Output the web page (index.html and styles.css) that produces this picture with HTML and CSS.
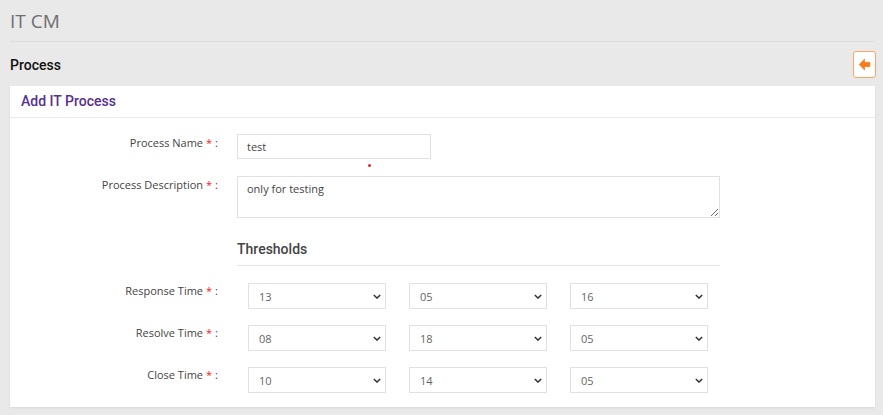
FILE: index.html
```html
<!DOCTYPE html>
<html>
<head>
  <meta charset="UTF-8">
  <title>IT CM - Add IT Process</title>
  <link rel="stylesheet" href="styles.css">
</head>
<body>
  <div class="page">
    <div class="page-header">
      <h1>IT CM</h1>
    </div>

    <div class="section-bar">
      <h2>Process</h2>
      <button class="back-btn" type="button" title="Back">
        <svg width="13" height="13" viewBox="0 0 12 12">
          <path d="M1 6 L6 1 L6 4 L11 4 L11 8 L6 8 L6 11 Z" fill="#f57c1f" stroke="#f57c1f" stroke-width="0.6" stroke-linejoin="round"/>
        </svg>
      </button>
    </div>

    <div class="card">
      <div class="card-header">Add IT Process</div>
      <div class="card-body">
        <div class="form-row">
          <label class="form-label">Process Name<span class="req">*</span><span class="colon">:</span></label>
          <div class="field">
            <input class="text-input name-input" type="text" value="test">
            <span class="error-dot"></span>
          </div>
        </div>

        <div class="form-row">
          <label class="form-label">Process Description<span class="req">*</span><span class="colon">:</span></label>
          <div class="field">
            <textarea class="text-input desc-input">only for testing</textarea>
          </div>
        </div>

        <div class="form-row">
          <div></div>
          <div class="thresholds-title">Thresholds</div>
        </div>

        <div class="form-row threshold-row">
          <label class="form-label">Response Time<span class="req">*</span><span class="colon">:</span></label>
          <div class="select-group">
            <div class="select-wrap"><select><option>13</option></select><svg class="chevron" viewBox="0 0 10 6"><path d="M1 1 L5 5 L9 1" fill="none" stroke="#333" stroke-width="1.8"/></svg></div>
            <div class="select-wrap"><select><option>05</option></select><svg class="chevron" viewBox="0 0 10 6"><path d="M1 1 L5 5 L9 1" fill="none" stroke="#333" stroke-width="1.8"/></svg></div>
            <div class="select-wrap"><select><option>16</option></select><svg class="chevron" viewBox="0 0 10 6"><path d="M1 1 L5 5 L9 1" fill="none" stroke="#333" stroke-width="1.8"/></svg></div>
          </div>
        </div>

        <div class="form-row threshold-row">
          <label class="form-label">Resolve Time<span class="req">*</span><span class="colon">:</span></label>
          <div class="select-group">
            <div class="select-wrap"><select><option>08</option></select><svg class="chevron" viewBox="0 0 10 6"><path d="M1 1 L5 5 L9 1" fill="none" stroke="#333" stroke-width="1.8"/></svg></div>
            <div class="select-wrap"><select><option>18</option></select><svg class="chevron" viewBox="0 0 10 6"><path d="M1 1 L5 5 L9 1" fill="none" stroke="#333" stroke-width="1.8"/></svg></div>
            <div class="select-wrap"><select><option>05</option></select><svg class="chevron" viewBox="0 0 10 6"><path d="M1 1 L5 5 L9 1" fill="none" stroke="#333" stroke-width="1.8"/></svg></div>
          </div>
        </div>

        <div class="form-row threshold-row">
          <label class="form-label">Close Time<span class="req">*</span><span class="colon">:</span></label>
          <div class="select-group">
            <div class="select-wrap"><select><option>10</option></select><svg class="chevron" viewBox="0 0 10 6"><path d="M1 1 L5 5 L9 1" fill="none" stroke="#333" stroke-width="1.8"/></svg></div>
            <div class="select-wrap"><select><option>14</option></select><svg class="chevron" viewBox="0 0 10 6"><path d="M1 1 L5 5 L9 1" fill="none" stroke="#333" stroke-width="1.8"/></svg></div>
            <div class="select-wrap"><select><option>05</option></select><svg class="chevron" viewBox="0 0 10 6"><path d="M1 1 L5 5 L9 1" fill="none" stroke="#333" stroke-width="1.8"/></svg></div>
          </div>
        </div>
      </div>
    </div>
  </div>
</body>
</html>
```

FILE: styles.css
```css
body {
  margin: 0;
  background-color: #e9e9e9;
  font-family: "Open Sans", "Noto Sans", sans-serif;
  color: #444;
}

.page {
  padding: 0 8px 8px 10px;
}

/* Page title */
.page-header {
  padding: 9px 0 8px;
  border-bottom: 1px solid #dcdcdc;
}

.page-header h1 {
  margin: 0;
  font-size: 19px;
  font-weight: 400;
  color: #6f6f6f;
  line-height: 24px;
}

/* Section bar with back button */
.section-bar {
  display: flex;
  align-items: center;
  justify-content: space-between;
  padding: 9px 0 8px;
}

.section-bar h2 {
  margin: 0;
  font-family: Roboto, sans-serif;
  font-size: 14px;
  font-weight: 500;
  color: #111;
}

.back-btn {
  width: 23px;
  height: 27px;
  margin-right: -1px;
  padding: 0;
  display: flex;
  align-items: center;
  justify-content: center;
  background: #fff;
  border: 1px solid #f7a565;
  border-radius: 3px;
}

/* Card */
.card {
  background: #fff;
  box-shadow: 0 1px 2px rgba(0, 0, 0, 0.08);
}

.card-header {
  padding: 7px 11px 8px;
  font-family: Roboto, sans-serif;
  font-size: 14px;
  font-weight: 500;
  color: #58308f;
  border-bottom: 1px solid #ececec;
}

.card-body {
  padding: 16px 0 14px;
}

.form-row {
  display: grid;
  grid-template-columns: 212px 483px;
  column-gap: 15px;
  margin-bottom: 17px;
}

.form-label {
  text-align: right;
  font-size: 11px;
  color: #444;
  padding-top: 1px;
  padding-right: 4px;
}

.req {
  color: #e32626;
  margin-left: 3px;
}

.colon {
  margin-left: 3px;
}

.field {
  position: relative;
}

.text-input {
  display: block;
  box-sizing: border-box;
  border: 1px solid #e1e1e1;
  font-family: inherit;
  font-size: 11px;
  color: #444;
  padding: 4px 9px;
  outline: none;
}

.name-input {
  width: 194px;
  height: 25px;
}

.desc-input {
  width: 483px;
  height: 42px;
  resize: vertical;
}

.error-dot {
  position: absolute;
  left: 131px;
  top: 30px;
  width: 3px;
  height: 3px;
  border-radius: 50%;
  background: #e32626;
}

/* Thresholds */
.thresholds-title {
  font-family: Roboto, sans-serif;
  font-size: 14px;
  font-weight: 500;
  color: #444;
  padding: 6px 0 8px;
  border-bottom: 1px solid #e3e3e3;
}

.threshold-row {
  margin-bottom: 16px;
}

.threshold-row:last-child {
  margin-bottom: 0;
}

.threshold-row .form-label {
  padding-top: 0;
}

.select-group {
  display: grid;
  grid-template-columns: repeat(3, 161px);
}

.select-wrap {
  position: relative;
  padding-left: 11px;
}

.select-wrap select {
  -webkit-appearance: none;
  appearance: none;
  width: 138px;
  height: 26px;
  border: 1px solid #e1e1e1;
  border-radius: 0;
  background: #fff;
  font-family: inherit;
  font-size: 11px;
  color: #666;
  padding: 0 10px;
}

.chevron {
  position: absolute;
  left: 136px;
  top: 11px;
  width: 8px;
  height: 5px;
  pointer-events: none;
}
```
